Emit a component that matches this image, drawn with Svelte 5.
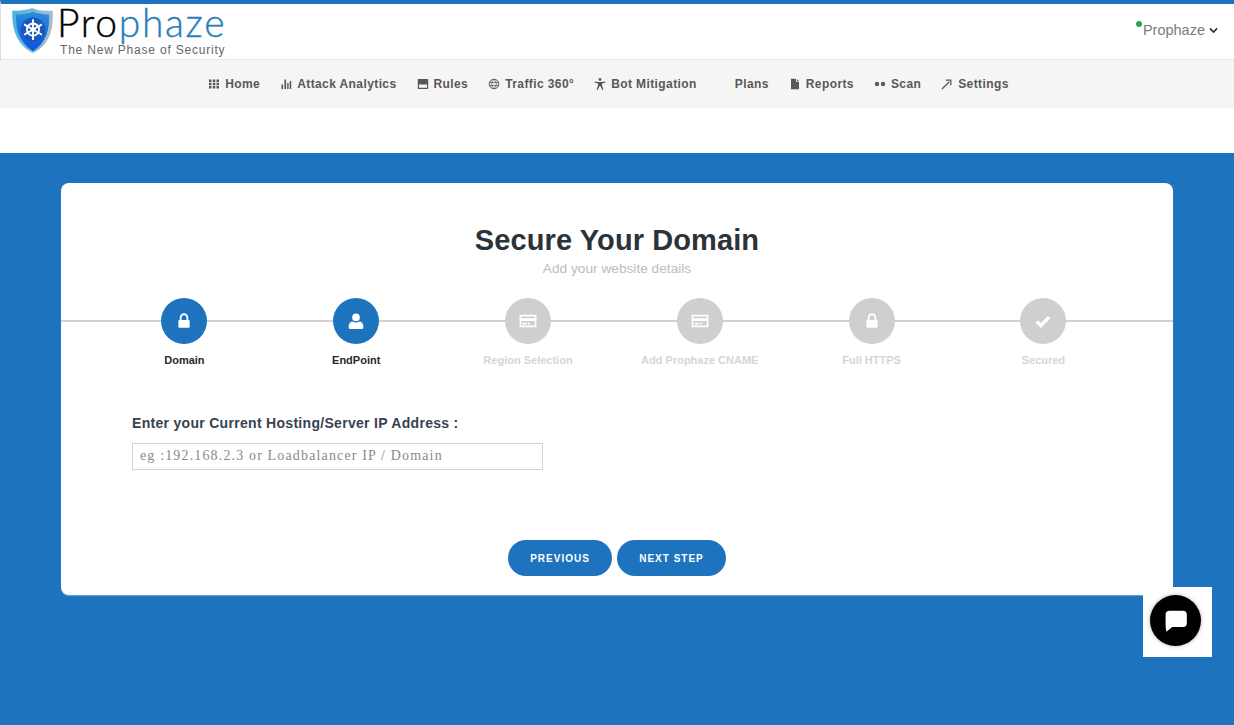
<script>
  const nav = [
    { label: "Home", icon: "grid" },
    { label: "Attack Analytics", icon: "bars" },
    { label: "Rules", icon: "drive" },
    { label: "Traffic 360°", icon: "globe" },
    { label: "Bot Mitigation", icon: "person", wide: true },
    { label: "Plans", icon: null },
    { label: "Reports", icon: "file" },
    { label: "Scan", icon: "dots" },
    { label: "Settings", icon: "wrench" },
  ];

  const steps = [
    { label: "Domain", icon: "lock", done: true },
    { label: "EndPoint", icon: "user", done: true },
    { label: "Region Selection", icon: "card" },
    { label: "Add Prophaze CNAME", icon: "card" },
    { label: "Full HTTPS", icon: "lock" },
    { label: "Secured", icon: "check" },
  ];
</script>

{#snippet navIcon(name)}
  <svg class="nav-icon" viewBox="0 0 12 12" aria-hidden="true">
    {#if name === "grid"}
      <path d="M1 1.500h2.500v2.400H1zM4.800 1.500h2.500v2.400H4.800zM8.500 1.500H11v2.400H8.500zM1 4.800h2.500v2.400H1zM4.800 4.800h2.500v2.400H4.800zM8.500 4.800H11v2.400H8.500zM1 8.100h2.500v2.400H1zM4.800 8.100h2.500v2.400H4.800zM8.500 8.100H11v2.400H8.500z" />
    {:else if name === "bars"}
      <path d="M1.500 6.500h1.600V11H1.500zM4.400 1.500h1.700V11H4.400zM7.200 5h1.400v6H7.200zM9.700 3h1.500v8H9.700z" />
    {:else if name === "drive"}
      <path d="M.8 1h10.400v10H.8zM2 6.600v3.200h8V6.600z" fill-rule="evenodd" />
    {:else if name === "globe"}
      <circle cx="6" cy="6" r="4.800" fill="none" stroke="currentColor" stroke-width="1" />
      <path d="M1.500 4.400h9M1.500 7.600h9M6 1.400c-3 3-3 6.200 0 9.200M6 1.400c3 3 3 6.200 0 9.200" fill="none" stroke="currentColor" stroke-width=".8" />
    {:else if name === "person"}
      <circle cx="6" cy="1.500" r="1.400" />
      <path d="M.8 3.400l3.600.7h3.200l3.600-.7.300 1-3.400 1v2l1.300 4.100-1.100.4L6.400 8h-.8l-1.900 3.900-1.100-.4L4 7.400v-2L.5 4.400z" />
    {:else if name === "file"}
      <path d="M2 .8h5v3h3v7.400H2zM8 .9l2 2H8z" />
    {:else if name === "dots"}
      <circle cx="3" cy="6" r="2.200" />
      <circle cx="9" cy="6" r="2.200" />
    {:else if name === "wrench"}
      <path d="M1 11l7.300-7.300M4.800 2.200h5v5" fill="none" stroke="currentColor" stroke-width="1.300" />
    {/if}
  </svg>
{/snippet}

{#snippet stepIcon(name)}
  <svg class="step-icon" viewBox="0 0 16 16" aria-hidden="true">
    {#if name === "lock"}
      <path d="M5 7V5a3 3 0 0 1 6 0v2" fill="none" stroke="currentColor" stroke-width="1.600" />
      <rect x="3" y="7" width="10" height="7" rx="1" />
    {:else if name === "user"}
      <circle cx="8" cy="4.800" r="3.400" />
      <path d="M1.500 14v-1.500C1.500 10 3.500 8.500 5 8.500c1.800 1.300 4.200 1.300 6 0 1.500 0 3.500 1.500 3.500 4V14c0 .5-.5 1-1 1h-11c-.5 0-1-.5-1-1z" />
    {:else if name === "card"}
      <path d="M.5 2.500h15v11H.5zM2 4v1.600h12V4zM2 8v4h12V8z" fill-rule="evenodd" />
      <path d="M3 9.500h4v1.500H3zM8 9.500h2v1.500H8z" />
    {:else if name === "check"}
      <path d="M2.500 8.500l3.600 3.500 7.400-7.500" fill="none" stroke="currentColor" stroke-width="3" />
    {/if}
  </svg>
{/snippet}

<div class="page">
  <header class="topbar">
    <div class="brand">
      <svg class="shield" viewBox="0 0 44 48" aria-hidden="true">
        <defs>
          <linearGradient id="rim" x1="0" y1="0" x2="1" y2="0">
            <stop offset="0" stop-color="#45b4e0" />
            <stop offset="1" stop-color="#a9bccb" />
          </linearGradient>
          <linearGradient id="face" x1="0" y1="0" x2="0" y2="1">
            <stop offset="0" stop-color="#2a8fd8" />
            <stop offset="1" stop-color="#0f50e0" />
          </linearGradient>
        </defs>
        <path d="M0 3c8 0 16-1 21-3 6 3 14 3 22 3 1 20-3 36-21 45C5 40-1 22 0 3z" fill="url(#rim)" />
        <path d="M4 7c7 0 13-1 18-3 5 2 11 3 17 3 1 16-3 30-17 39C8 37 3 23 4 7z" fill="url(#face)" />
        <circle cx="22" cy="23" r="13" fill="#1a58c0" />
        <g stroke="#fff" stroke-width="2" fill="none">
          <circle cx="22" cy="23" r="6.500" />
          <path d="M22 12v22M12.500 17.500l19 11M12.500 28.500l19-11" />
        </g>
        <circle cx="22" cy="23" r="2.500" fill="#fff" />
      </svg>
      <div class="wordmark">
        <div class="name">Pro<span>phaze</span></div>
        <div class="tagline">The New Phase of Security</div>
      </div>
    </div>
    <div class="account">
      <span class="status"></span>
      <span>Prophaze</span>
      <svg class="chevron" viewBox="0 0 10 7" aria-hidden="true">
        <path d="M1 1.200l4 4 4-4" fill="none" stroke="currentColor" stroke-width="1.800" />
      </svg>
    </div>
  </header>

  <nav class="menu">
    {#each nav as item}
      <span class="menu-item" class:wide={item.wide}>
        {#if item.icon}{@render navIcon(item.icon)}{/if}
        {item.label}
      </span>
    {/each}
  </nav>

  <div class="spacer"></div>

  <main class="stage">
    <section class="card">
      <h1>Secure Your Domain</h1>
      <p class="subtitle">Add your website details</p>

      <ol class="steps">
        {#each steps as step}
          <li class="step" class:done={step.done}>
            <span class="bubble">{@render stepIcon(step.icon)}</span>
            <span class="step-label">{step.label}</span>
          </li>
        {/each}
      </ol>

      <div class="field">
        <label for="ip">Enter your Current Hosting/Server IP Address :</label>
        <input id="ip" placeholder="eg :192.168.2.3 or Loadbalancer IP / Domain" />
      </div>

      <div class="actions">
        <button class="btn prev" type="button">Previous</button>
        <button class="btn next" type="button">Next Step</button>
      </div>
    </section>
  </main>

  <div class="chat">
    <span class="chat-button">
      <svg viewBox="0 0 24 24" aria-hidden="true">
        <path d="M5.500 2.500h13A3.500 3.500 0 0 1 22 6v8a3.500 3.500 0 0 1-3.500 3.500H8.500L3.200 22c-.5-2-.8-4-.8-6V6A3.500 3.500 0 0 1 5.500 2.500z" fill="#fff" />
      </svg>
    </span>
  </div>
</div>

<style>
  :global(body) {
    background: #1e73be;
  }

  .page {
    position: relative;
    display: flex;
    flex-direction: column;
    height: 725px;
    overflow: hidden;
    font-family: "Liberation Sans", Arial, sans-serif;
  }

  .topbar {
    display: flex;
    align-items: flex-start;
    justify-content: space-between;
    height: 55px;
    background: #fff;
    border-top: 4px solid #1e73be;
    border-left: 1px solid #ddd;
    border-bottom: 1px solid #e6e6e6;
  }

  .brand {
    display: flex;
    align-items: flex-start;
    gap: 3px;
    padding: 4px 0 0 11px;
  }

  .shield {
    width: 42px;
    height: 45px;
  }

  .wordmark {
    display: flex;
    flex-direction: column;
    margin-top: -4px;
  }

  .name {
    font-family: Lato, "Open Sans", sans-serif;
    font-weight: 300;
    font-size: 39px;
    line-height: 36px;
    letter-spacing: 1.700px;
    color: #000;
    -webkit-text-stroke: 0.4px currentColor;
  }

  .name span {
    color: #2a7fba;
  }

  .tagline {
    margin: 4px 0 0 3px;
    font-size: 12px;
    line-height: 13px;
    letter-spacing: 0.8px;
    color: #62676b;
    white-space: nowrap;
  }

  .account {
    position: relative;
    display: flex;
    align-items: center;
    gap: 4px;
    margin: 18px 16px 0 0;
    font-size: 14.500px;
    line-height: 16px;
    color: #7c7c7c;
  }

  .status {
    position: absolute;
    left: -7px;
    top: -1px;
    width: 6px;
    height: 6px;
    border-radius: 50%;
    background: #22a84f;
  }

  .chevron {
    width: 9px;
    height: 7px;
    color: #333;
  }

  .menu {
    display: flex;
    justify-content: center;
    align-items: center;
    gap: 20px;
    height: 48px;
    padding-right: 17px;
    background: #f5f5f5;
    font-size: 12px;
    font-weight: 700;
    letter-spacing: 0.4px;
    color: #585858;
    white-space: nowrap;
  }

  .menu-item {
    display: flex;
    align-items: center;
    gap: 5px;
  }

  .menu-item.wide {
    margin-right: 18px;
  }

  .nav-icon {
    width: 12px;
    height: 12px;
    fill: currentColor;
  }

  .spacer {
    height: 45px;
    background: #fff;
  }

  .stage {
    flex: 1;
    padding: 30px 61px 0 61px;
    background: #1e73be;
  }

  .card {
    display: flex;
    flex-direction: column;
    height: 412px;
    box-sizing: border-box;
    padding-top: 40px;
    background: #fff;
    border-radius: 8px;
    box-shadow: 0 1px 1px rgba(255, 255, 255, 0.35);
  }

  h1 {
    margin: 0;
    text-align: center;
    font-size: 29px;
    line-height: 34px;
    font-weight: 700;
    letter-spacing: 0.1px;
    color: #2c3338;
  }

  .subtitle {
    margin: 4px 0 0;
    text-align: center;
    font-size: 13.700px;
    line-height: 16px;
    color: #bdbdbd;
  }

  .steps {
    position: relative;
    display: grid;
    grid-template-columns: repeat(6, 171.800px);
    margin: 21px 0 0;
    padding: 0 0 0 37.500px;
    list-style: none;
  }

  .steps::before {
    content: "";
    position: absolute;
    left: 0;
    right: 0;
    top: 22px;
    height: 2px;
    background: #d2d2d2;
  }

  .step {
    position: relative;
    display: flex;
    flex-direction: column;
    align-items: center;
    gap: 10px;
  }

  .bubble {
    display: flex;
    align-items: center;
    justify-content: center;
    width: 46px;
    height: 46px;
    border-radius: 50%;
    background: #cfcfcf;
    color: #fff;
  }

  .done .bubble {
    background: #1e73be;
  }

  .step-icon {
    width: 18px;
    height: 18px;
    fill: currentColor;
  }

  .step-label {
    font-size: 11px;
    line-height: 13px;
    font-weight: 700;
    color: #d6d6d6;
  }

  .done .step-label {
    color: #2a2a2a;
  }

  .field {
    display: flex;
    flex-direction: column;
    align-items: flex-start;
    gap: 12px;
    margin: 48px 0 0 71px;
  }

  label {
    font-size: 14px;
    line-height: 16px;
    font-weight: 700;
    letter-spacing: 0.3px;
    color: #37424f;
  }

  input {
    box-sizing: border-box;
    width: 411px;
    height: 27px;
    padding: 0 7px 2px;
    border: 1px solid #d4d4d4;
    background: #fff;
    font-family: "Liberation Serif", serif;
    font-size: 14px;
    letter-spacing: 1.150px;
    outline: none;
  }

  input::placeholder {
    color: #8a8a8a;
    opacity: 1;
  }

  .actions {
    display: flex;
    justify-content: center;
    gap: 5px;
    margin: 70px 0 0;
  }

  .btn {
    height: 36px;
    border: 0;
    border-radius: 18px;
    background: #1e73be;
    color: #fff;
    font-family: "Liberation Sans", Arial, sans-serif;
    font-size: 10px;
    font-weight: 700;
    letter-spacing: 1px;
    text-transform: uppercase;
  }

  .prev {
    width: 104px;
  }

  .next {
    width: 109px;
  }

  .chat {
    position: absolute;
    left: 1143px;
    top: 587px;
    box-sizing: border-box;
    display: flex;
    width: 69px;
    height: 70px;
    padding: 8px 0 0 7px;
    background: #fff;
  }

  .chat-button {
    display: flex;
    align-items: center;
    justify-content: center;
    width: 51px;
    height: 51px;
    border-radius: 50%;
    background: #000;
    box-shadow: 0 0 4px rgba(0, 0, 0, 0.3);
  }

  .chat-button svg {
    width: 26px;
    height: 26px;
  }
</style>
